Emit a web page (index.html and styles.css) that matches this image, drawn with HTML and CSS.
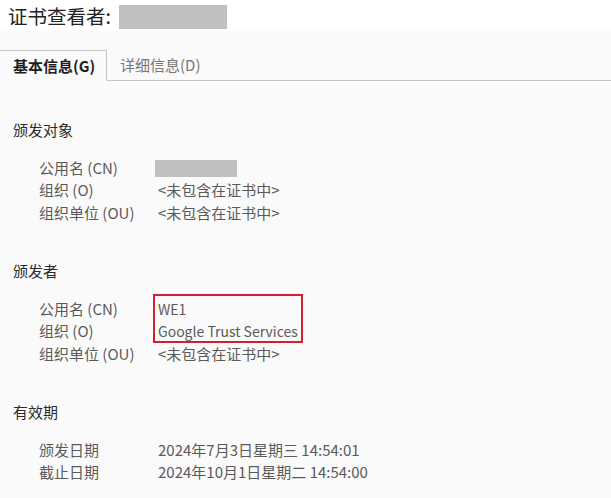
FILE: index.html
```html
<!DOCTYPE html>
<html lang="zh-CN">
<head>
<meta charset="utf-8">
<link rel="stylesheet" href="styles.css">
</head>
<body>
<header class="titlebar">
  <span class="title">证书查看者:</span>
  <span class="redact redact-title"></span>
</header>
<nav class="tabs">
  <div class="tab active">基本信息(G)</div>
  <div class="tab">详细信息(D)</div>
  <div class="tab-fill"></div>
</nav>
<main class="content">
  <section class="group">
    <h2 class="heading">颁发对象</h2>
    <div class="rows">
      <div class="row"><span class="label">公用名 (CN)</span><span class="value"><span class="redact redact-row"></span></span></div>
      <div class="row"><span class="label">组织 (O)</span><span class="value">&lt;未包含在证书中&gt;</span></div>
      <div class="row"><span class="label">组织单位 (OU)</span><span class="value">&lt;未包含在证书中&gt;</span></div>
    </div>
  </section>
  <section class="group">
    <h2 class="heading">颁发者</h2>
    <div class="rows">
      <div class="highlight"></div>
      <div class="row"><span class="label">公用名 (CN)</span><span class="value latin">WE1</span></div>
      <div class="row"><span class="label">组织 (O)</span><span class="value latin">Google Trust Services</span></div>
      <div class="row"><span class="label">组织单位 (OU)</span><span class="value">&lt;未包含在证书中&gt;</span></div>
    </div>
  </section>
  <section class="group">
    <h2 class="heading">有效期</h2>
    <div class="rows">
      <div class="row"><span class="label">颁发日期</span><span class="value">2024年7月3日星期三 14:54:01</span></div>
      <div class="row"><span class="label">截止日期</span><span class="value">2024年10月1日星期二 14:54:00</span></div>
    </div>
  </section>
</main>
</body>
</html>
```
FILE: styles.css
```css
* { box-sizing: border-box; }
html, body { margin: 0; padding: 0; }
body {
  background: #fafafa;
  font-family: "Noto Sans CJK SC", "Open Sans", sans-serif;
  color: #555;
  width: 611px;
  height: 498px;
  overflow: hidden;
}
.titlebar {
  height: 31px;
  background: #ffffff;
  display: flex;
  align-items: flex-start;
  padding-left: 8px;
}
.title {
  font-size: 19.5px;
  line-height: 24px;
  margin-top: 4px;
  color: #222;
  width: 111px;
}
.redact { display: inline-block; background: #c0c0c0; }
.redact-title { width: 108px; height: 24px; margin-top: 5px; }
.redact-row { width: 82px; height: 17px; margin-left: -3px; }

.tabs {
  display: flex;
  margin-top: 19px;
  height: 31px;
}
.tab {
  height: 31px;
  font-size: 15px;
  line-height: 30px;
  color: #777;
  border-bottom: 1px solid #c4c4c4;
}
.tab.active {
  width: 107px;
  padding-left: 13px;
  font-weight: bold;
  color: #1e1e1e;
  border-top: 1px solid #c4c4c4;
  border-right: 1px solid #c4c4c4;
  border-bottom: 1px solid transparent;
}
.tab:not(.active) { padding-left: 13px; width: 110px; }
.tab-fill { flex: 1; border-bottom: 1px solid #c4c4c4; }

.content {
  padding-top: 39px;
  display: flex;
  flex-direction: column;
  gap: 36.75px;
}
.heading {
  margin: 0;
  padding-left: 13px;
  font-size: 15px;
  font-weight: normal;
  line-height: 20px;
  color: #2a2a2a;
}
.rows {
  position: relative;
  margin-top: 16.75px;
  padding-left: 39px;
}
.row {
  display: flex;
  font-size: 15px;
  line-height: 22.5px;
  height: 22.5px;
  color: #5a5a5a;
}
.label { width: 119px; flex: none; }
.value { display: flex; align-items: center; }
.value.latin { font-size: 14px; }
.highlight {
  position: absolute;
  left: 153px;
  top: -4px;
  width: 150px;
  height: 49px;
  border: 2px solid #d4202c;
}
```
